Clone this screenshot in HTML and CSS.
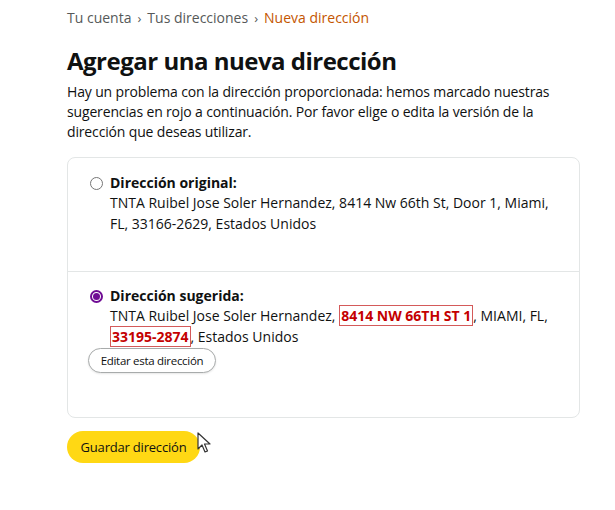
FILE: index.html
```html
<!DOCTYPE html>
<html lang="es">
<head>
<meta charset="utf-8">
<link rel="stylesheet" href="styles.css">
</head>
<body>
<div class="page">
  <nav class="crumbs">
    <span>Tu cuenta</span><span class="sep">›</span><span>Tus direcciones</span><span class="sep">›</span><span class="current">Nueva dirección</span>
  </nav>
  <h1 class="title">Agregar una nueva dirección</h1>
  <p class="intro">Hay un problema con la dirección proporcionada: hemos marcado nuestras sugerencias en rojo a continuación. Por favor elige o edita la versión de la dirección que deseas utilizar.</p>

  <div class="card">
    <div class="option option-first">
      <span class="radio"></span>
      <div class="opt-body">
        <div class="opt-title">Dirección original:</div>
        <div class="opt-text">TNTA Ruibel Jose Soler Hernandez, 8414 Nw 66th St, Door 1, Miami, FL, 33166-2629, Estados Unidos</div>
      </div>
    </div>
    <div class="option option-second">
      <span class="radio radio-on"></span>
      <div class="opt-body">
        <div class="opt-title">Dirección sugerida:</div>
        <div class="opt-text">TNTA Ruibel Jose Soler Hernandez, <span class="mark">8414 NW 66TH ST 1</span>, MIAMI, FL, <span class="mark">33195-2874</span>, Estados Unidos</div>
      </div>
    </div>
    <button class="edit-btn">Editar esta dirección</button>
  </div>

  <div class="actions">
    <button class="save-btn">Guardar dirección</button>
    <svg class="cursor" width="14" height="22" viewBox="0 0 14 22"><path d="M1 1 L1 17 L5 13 L8 20 L10.5 19 L7.5 12 L13 12 Z" fill="#fff" stroke="#333" stroke-width="1.2" stroke-linejoin="round"/></svg>
  </div>
</div>
</body>
</html>
```

FILE: styles.css
```css
* { box-sizing: border-box; }
html, body { margin: 0; padding: 0; background: #fff; }
body {
  font-family: "Open Sans", "Noto Sans", Arial, sans-serif;
  color: #0f1111;
  font-size: 14px;
  width: 615px;
  height: 510px;
  overflow: hidden;
}
.page {
  padding: 8px 35px 0 67px;
}
.crumbs {
  font-size: 14px;
  line-height: 20px;
  color: #565959;
  display: flex;
  align-items: center;
}
.crumbs .sep {
  margin: 0 6px;
  font-size: 13px;
}
.crumbs .current { color: #c45500; }
.title {
  margin: 17px 0 0 0;
  font-size: 24px;
  line-height: 32px;
  font-weight: 700;
  letter-spacing: -0.5px;
}
.intro {
  margin: 5px 0 0 0;
  line-height: 20px;
  font-size: 14px;
  letter-spacing: -0.15px;
}
.card {
  margin-top: 15px;
  width: 513px;
  height: 261px;
  border: 1px solid #e3e6e6;
  border-radius: 8px;
}
.option {
  display: flex;
  align-items: flex-start;
  padding: 15px 20px 0 22px;
  letter-spacing: 0;
}
.option-first {
  height: 114px;
  border-bottom: 1px solid #e3e6e6;
}
.option-second { padding-top: 14px; }
.radio {
  width: 13px;
  height: 13px;
  border: 1px solid #767676;
  border-radius: 50%;
  flex: none;
  margin-top: 4px;
  margin-right: 7px;
  background: #fff;
}
.radio-on {
  border: 2px solid #6f0c94;
  position: relative;
}
.radio-on::after {
  content: "";
  position: absolute;
  left: 1px; top: 1px;
  width: 7px; height: 7px;
  border-radius: 50%;
  background: #6f0c94;
}
.opt-title {
  font-weight: 700;
  line-height: 20px;
}
.opt-text { line-height: 20.5px; }
.mark {
  color: #c40000;
  font-weight: 700;
  border: 1px solid #d45a5a;
  padding: 0 1px;
}
.edit-btn {
  margin: 1px 0 0 20px;
  height: 25px;
  width: 128px;
  padding: 0;
  border: 1px solid #a8abab;
  border-radius: 13px;
  background: #fff;
  font-family: inherit;
  font-size: 11.5px;
  color: #0f1111;
  letter-spacing: -0.3px;
  box-shadow: 0 1px 2px rgba(15,17,17,.1);
}
.actions {
  margin-top: 13px;
  display: flex;
  position: relative;
}
.save-btn {
  height: 32px;
  width: 133px;
  border: none;
  border-radius: 16px;
  background: #ffd814;
  font-family: inherit;
  font-size: 13px;
  color: #0f1111;
  letter-spacing: -0.2px;
}
.cursor {
  position: absolute;
  left: 130px;
  top: 1px;
}
```
